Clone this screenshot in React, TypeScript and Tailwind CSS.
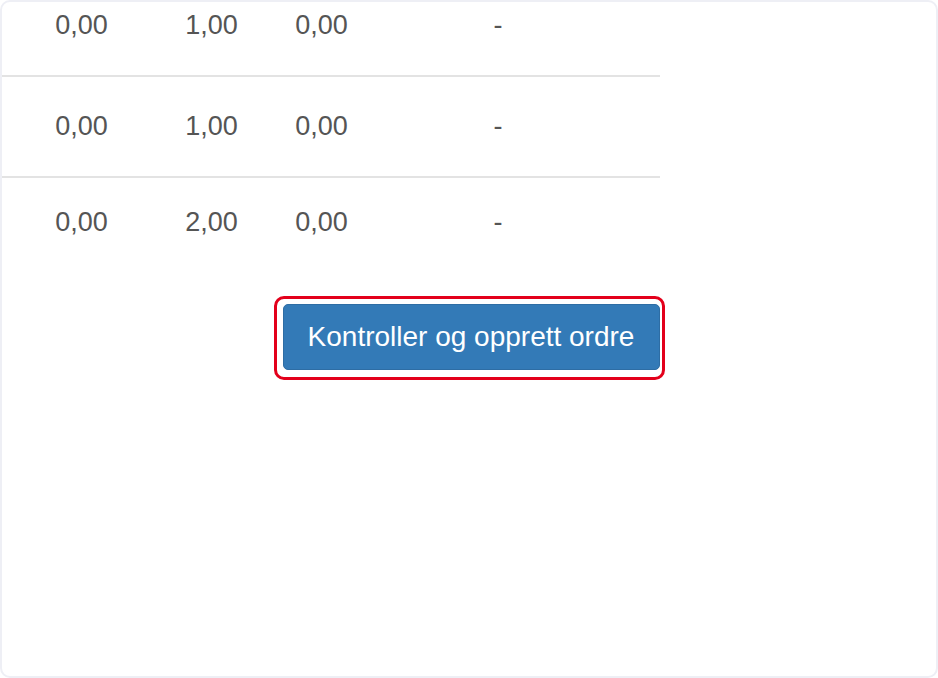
// Order lines table tail with the "create order" button

const rows = [
  { a: '0,00', b: '1,00', c: '0,00', d: '-', h: 'h-[100px]' },
  { a: '0,00', b: '1,00', c: '0,00', d: '-', h: 'h-[101px]' },
  { a: '0,00', b: '2,00', c: '0,00', d: '-', h: 'h-[90px]' },
];

export default function App() {
  return (
    <div
      className="w-[938px] h-[678px] overflow-hidden bg-white"
      style={{ fontFamily: '"Liberation Sans", Arial, sans-serif' }}
    >
      <div className="h-full w-full rounded-[10px] border-2 border-[#eeeff5] overflow-hidden">
        {/* table, first row partially scrolled off */}
        <div className="w-[660px] -mt-[27px] -ml-[2px] text-[27px] text-[#555]">
          {rows.map((r, i) => (
            <div
              key={i}
              className={`grid grid-cols-[163px_97px_123px_230px_1fr] items-center ${r.h} ${
                i > 0 ? 'border-t-2 border-[#e3e3e3]' : ''
              }`}
            >
              <span className="text-center">{r.a}</span>
              <span className="text-center">{r.b}</span>
              <span className="text-center">{r.c}</span>
              <span className="text-center">{r.d}</span>
              <span />
            </div>
          ))}
        </div>

        <div className="flex justify-center pt-[30px]">
          <div className="rounded-[10px] border-[3px] border-[#e3001b] pl-[6px] pr-[2px] pt-[5px] pb-[7px]">
            <button className="h-[66px] w-[377px] rounded-[5px] border border-[#2e6da4] bg-[#337ab7] text-[28px] text-white">
              Kontroller og opprett ordre
            </button>
          </div>
        </div>
      </div>
    </div>
  );
}
